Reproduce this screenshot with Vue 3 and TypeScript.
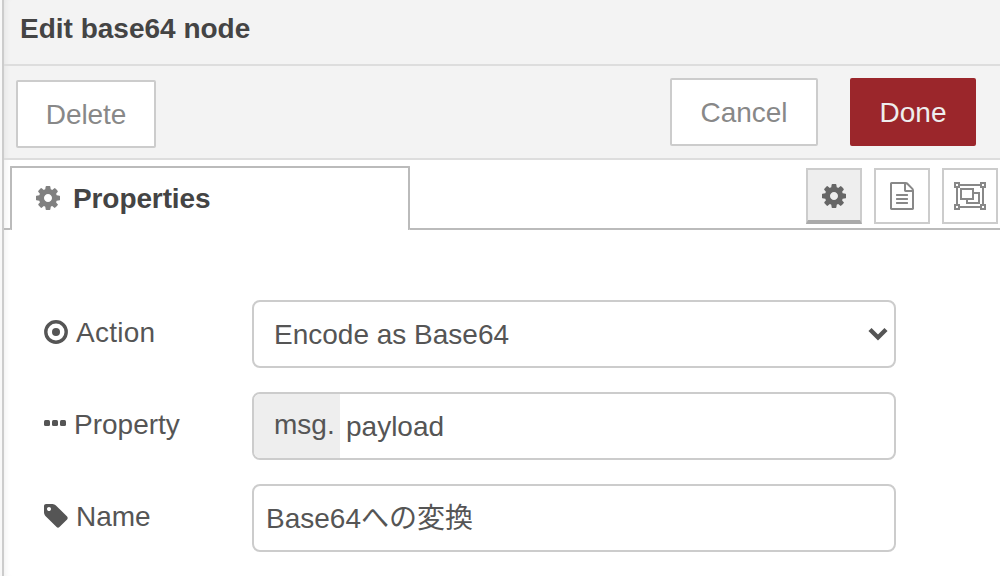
<script setup lang="ts">
import { ref } from 'vue'

const action = ref('encode')
const property = ref('payload')
const name = ref('Base64への変換')

const cogPath =
  'M1024 896q0-106-75-181t-181-75-181 75-75 181 75 181 181 75 181-75 75-181zm512-109v222q0 12-8 23t-20 13l-185 28q-19 54-39 91 35 50 107 138 10 12 10 25t-9 23q-27 37-99 108t-94 71q-12 0-26-9l-138-108q-44 23-91 38-16 136-29 186-7 28-36 28h-222q-14 0-24.5-8.5t-11.5-21.5l-28-184q-49-16-90-37l-141 107q-10 9-25 9-14 0-25-11-126-114-165-168-7-10-7-23 0-12 8-23 15-21 51-66.5t54-70.5q-27-50-41-99l-183-27q-13-2-21-12.5t-8-23.5v-222q0-12 8-23t19-13l186-28q14-46 39-92-40-57-107-138-10-12-10-24 0-10 9-23 26-36 98.5-107.5t94.5-71.5q13 0 26 10l138 107q44-23 91-38 16-136 29-186 7-28 36-28h222q14 0 24.5 8.5t11.5 21.5l28 184q49 16 90 37l142-107q9-9 24-9 13 0 25 10 129 119 165 170 7 8 7 22 0 12-8 23-15 21-51 66.5t-54 70.5q26 50 41 98l183 28q13 2 21 12.5t8 23.5z'
</script>

<template>
  <div class="tray">
    <header class="title">Edit base64 node</header>

    <div class="toolbar">
      <button class="btn delete">Delete</button>
      <button class="btn cancel">Cancel</button>
      <button class="btn primary">Done</button>
    </div>

    <nav class="tabs">
      <div class="tab-lead"></div>
      <div class="tab">
        <svg class="cog" width="24" height="24" viewBox="0 128 1536 1536"><path :d="cogPath" /></svg>
        <span>Properties</span>
      </div>
      <div class="tab-icons">
        <button class="icon-btn selected">
          <svg width="24" height="24" viewBox="0 128 1536 1536"><path :d="cogPath" /></svg>
        </button>
        <button class="icon-btn">
          <svg width="24" height="28" viewBox="0 0 1536 1792">
            <path d="M1468 380q28 28 48 76t20 88v1152q0 40-28 68t-68 28h-1344q-40 0-68-28t-28-68v-1600q0-40 28-68t68-28h896q40 0 88 20t76 48zm-444-244v376h376q-10-29-22-41l-313-313q-12-12-41-22zm384 1528v-1024h-416q-40 0-68-28t-28-68v-416h-768v1536h1280zm-1024-864q0-14 9-23t23-9h704q14 0 23 9t9 23v64q0 14-9 23t-23 9h-704q-14 0-23-9t-9-23v-64zm736 224q14 0 23 9t9 23v64q0 14-9 23t-23 9h-704q-14 0-23-9t-9-23v-64q0-14 9-23t23-9h704zm0 256q14 0 23 9t9 23v64q0 14-9 23t-23 9h-704q-14 0-23-9t-9-23v-64q0-14 9-23t23-9h704z" />
          </svg>
        </button>
        <button class="icon-btn">
          <svg class="outline" width="32" height="28" viewBox="0 0 32 28">
            <path d="M6 3h20M6 25h20M3 6v16M29 6v16" />
            <path d="M1 1h4v4H1zM27 1h4v4h-4zM1 23h4v4H1zM27 23h4v4h-4z" />
            <path d="M7 7h12v10H7zM19 11h6v10H13v-4" />
          </svg>
        </button>
      </div>
    </nav>

    <form class="form" @submit.prevent>
      <div class="row">
        <label>
          <svg width="24" height="24" viewBox="0 0 24 24">
            <circle cx="12" cy="12" r="10.2" fill="none" stroke="currentColor" stroke-width="3.4" />
            <circle cx="12" cy="12" r="4" />
          </svg>
          <span class="action-label">Action</span>
        </label>
        <div class="field">
          <select v-model="action">
            <option value="encode">Encode as Base64</option>
            <option value="decode">Decode Base64</option>
          </select>
          <svg class="chevron" width="20" height="14" viewBox="0 0 20 14">
            <path d="M2 2.5l8 8 8-8" />
          </svg>
        </div>
      </div>

      <div class="row">
        <label>
          <svg class="dots" width="22" height="6" viewBox="0 0 22 6">
            <rect width="6" height="6" rx="1.5" />
            <rect x="8" width="6" height="6" rx="1.5" />
            <rect x="16" width="6" height="6" rx="1.5" />
          </svg>
          <span>Property</span>
        </label>
        <div class="field">
          <span class="prefix">msg.</span>
          <input v-model="property" class="typed" type="text" />
        </div>
      </div>

      <div class="row">
        <label>
          <svg width="24" height="24" viewBox="0 128 1536 1536">
            <path d="M448 448q0-53-37.5-90.5t-90.5-37.5-90.5 37.5-37.5 90.5 37.5 90.5 90.5 37.5 90.5-37.5 37.5-90.5zm1067 576q0 53-37 90l-491 492q-39 37-91 37-53 0-90-37l-715-716q-38-37-64.5-101t-26.5-117v-416q0-52 38-90t90-38h416q53 0 117 26.5t102 64.5l715 714q37 39 37 91z" />
          </svg>
          <span>Name</span>
        </label>
        <div class="field">
          <input v-model="name" class="plain" type="text" />
        </div>
      </div>
    </form>
  </div>
</template>

<style>
body {
  margin: 0;
  overflow: hidden;
  background: #f8f8f8;
}
</style>

<style scoped>
.tray,
.tray * {
  box-sizing: border-box;
}

.tray {
  height: 576px;
  margin-left: 2px;
  border-left: 2px solid #ccc;
  background: #fff;
  box-shadow: inset 6px 0 6px -5px rgba(0, 0, 0, 0.07);
  color: #555;
  font: 28px/32px "Liberation Sans", "Noto Sans CJK JP", Arial, sans-serif;
}

svg {
  display: block;
  flex: none;
  fill: currentColor;
}

button,
input,
select {
  margin: 0;
  font: inherit;
  color: inherit;
}

.title {
  height: 66px;
  padding: 13px 16px 0;
  border-bottom: 2px solid #ddd;
  background: rgba(0, 0, 0, 0.048);
  color: #444;
  font-weight: bold;
}

.toolbar {
  display: flex;
  align-items: flex-start;
  height: 94px;
  padding: 12px 24px 0 12px;
  border-bottom: 2px solid #ddd;
  background: rgba(0, 0, 0, 0.048);
}

.btn {
  height: 68px;
  padding: 2px 0 0;
  border: 2px solid #ccc;
  border-radius: 2px;
  background: #fff;
  color: #888;
}

.delete {
  width: 140px;
  margin: 2px auto 0 0;
  letter-spacing: -0.1px;
}

.cancel {
  width: 148px;
  margin-right: 32px;
}

.primary {
  width: 126px;
  border-color: #9b262b;
  background: #9b262b;
  color: #eee;
}

.tabs {
  display: flex;
  height: 70px;
  padding-top: 6px;
}

.tab-lead {
  width: 6px;
  border-bottom: 2px solid #bbb;
}

.tab {
  display: flex;
  align-items: center;
  gap: 13px;
  width: 400px;
  padding: 0 24px 1px;
  border: 2px solid #bbb;
  border-bottom: 0;
  border-radius: 1px;
  color: #444;
  font-weight: bold;
  letter-spacing: -0.1px;
}

.cog {
  margin-bottom: 2px;
  color: #808080;
}

.tab-icons {
  display: flex;
  flex: 1;
  justify-content: flex-end;
  gap: 12px;
  padding: 2px 2px 0 0;
  border-bottom: 2px solid #bbb;
}

.icon-btn {
  display: flex;
  align-items: center;
  justify-content: center;
  width: 56px;
  height: 56px;
  padding: 0;
  border: 2px solid #ccc;
  background: #fff;
  color: #888;
}

.icon-btn.selected {
  padding-top: 2px;
  border-bottom: 4px solid #aaa;
  background: #eee;
  color: #666;
}

.outline {
  fill: none;
  stroke: currentColor;
  stroke-width: 2;
}

.form {
  display: flex;
  flex-direction: column;
  gap: 24px;
  padding: 70px 0 0 40px;
}

.row {
  display: flex;
}

label {
  display: flex;
  align-items: center;
  gap: 8px;
  width: 208px;
  height: 64px;
}

label span {
  padding-top: 2px;
}

.action-label {
  letter-spacing: 0.25px;
}

.dots {
  margin-bottom: 3px;
}

.field {
  display: flex;
  align-items: center;
  width: 644px;
  height: 68px;
  overflow: hidden;
  border: 2px solid #ccc;
  border-radius: 8px;
  background: #fff;
}

select,
input {
  flex: 1;
  min-width: 0;
  height: 64px;
  border: 0;
  outline: 0;
  background: transparent;
  appearance: none;
}

select {
  padding: 2px 0 0 20px;
}

.chevron {
  margin-right: 6px;
  fill: none;
  stroke: currentColor;
  stroke-width: 4.4;
}

.prefix {
  width: 86px;
  height: 64px;
  padding: 15px 0 0 20px;
  background: #eee;
}

.typed {
  padding: 2px 6px 0;
}

.plain {
  padding: 0 12px 4px;
}
</style>
